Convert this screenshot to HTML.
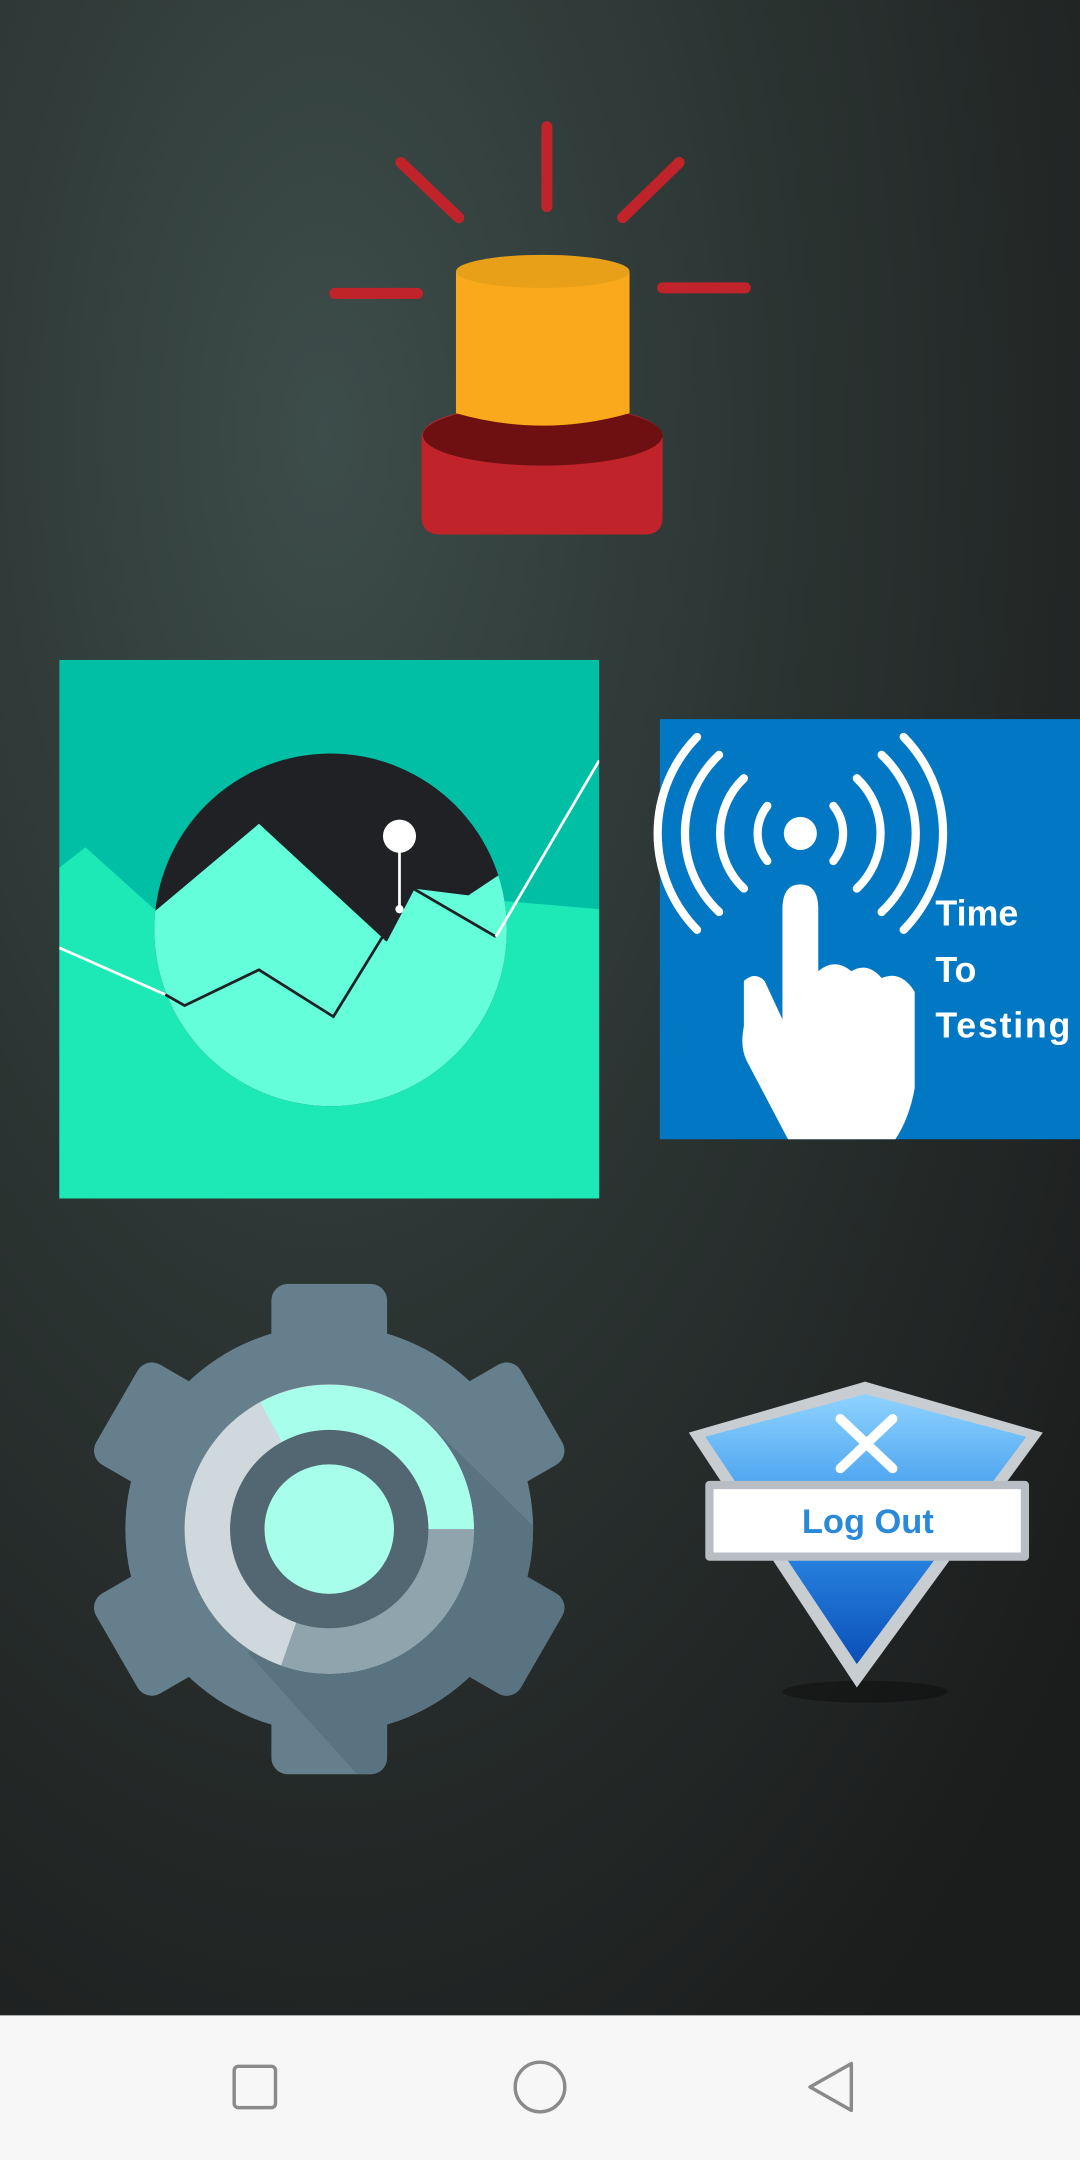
<!DOCTYPE html>
<html><head><meta charset="utf-8"><style>html,body{margin:0;padding:0;width:1080px;height:2160px;overflow:hidden;background:#222}svg{display:block}</style></head><body>
<svg width="1080" height="2160" viewBox="0 0 784 1568" xmlns="http://www.w3.org/2000/svg">
<defs>
<radialGradient id="bg" cx="0.3" cy="0.2" r="0.9">
<stop offset="0" stop-color="#3d4d4a"/><stop offset="0.45" stop-color="#2c3533"/><stop offset="1" stop-color="#1b1c1c"/></radialGradient>
<clipPath id="cc"><circle cx="240" cy="675" r="128"/></clipPath>
<clipPath id="sq"><rect x="43" y="479" width="392" height="391"/></clipPath>
<linearGradient id="sh" x1="0" y1="0" x2="0" y2="1"><stop offset="0" stop-color="#8fd3ff"/><stop offset="0.5" stop-color="#2f8fe8"/><stop offset="1" stop-color="#0a4fb8"/></linearGradient>
<clipPath id="gc">
<circle cx="239" cy="1110" r="148"/>
<rect x="197" y="932" width="84" height="70" rx="12" transform="rotate(0 239 1110)"/>
<rect x="197" y="932" width="84" height="70" rx="12" transform="rotate(60 239 1110)"/>
<rect x="197" y="932" width="84" height="70" rx="12" transform="rotate(120 239 1110)"/>
<rect x="197" y="932" width="84" height="70" rx="12" transform="rotate(180 239 1110)"/>
<rect x="197" y="932" width="84" height="70" rx="12" transform="rotate(240 239 1110)"/>
<rect x="197" y="932" width="84" height="70" rx="12" transform="rotate(300 239 1110)"/>
</clipPath>
</defs>
<rect width="784" height="1568" fill="url(#bg)"/>
<!-- alarm -->
<g stroke="#c0242a" stroke-width="8" stroke-linecap="round">
<line x1="397" y1="92" x2="397" y2="150"/><line x1="291" y1="118" x2="333" y2="158"/><line x1="493" y1="118" x2="452" y2="158"/><line x1="243" y1="213" x2="303" y2="213"/><line x1="481" y1="209" x2="541" y2="209"/></g>
<path d="M306,318 Q306,296 394,294 Q481,296 481,318 L481,375 Q481,388 468,388 L320,388 Q306,388 306,375 Z" fill="#c0242a"/>
<ellipse cx="394" cy="316" rx="87" ry="22" fill="#6e1012"/>
<path d="M331,197 L457,197 L457,300 Q394,318 331,300 Z" fill="#f9a91b"/>
<ellipse cx="394" cy="197" rx="63" ry="12" fill="#e8a019"/>
<!-- chart -->
<g clip-path="url(#sq)">
<rect x="43" y="479" width="392" height="391" fill="#01bfa5"/>
<polygon points="43,630 62,615 112,660 200,640 435,660 435,870 43,870" fill="#1de9b6"/>
<circle cx="240" cy="675" r="128" fill="#1f2125"/>
<polygon clip-path="url(#cc)" points="100,672 188,598 280,683 300,645 340,650 370,630 370,810 100,810" fill="#64ffda"/>
<polyline points="43,688 120,722" fill="none" stroke="#fff" stroke-width="2"/>
<polyline points="120,722 134,730 188,704 242,738 290,660" fill="none" stroke="#1f2125" stroke-width="2"/>
<polyline points="280,683 300,645 360,680" fill="none" stroke="#1f2125" stroke-width="2"/>
<polyline points="360,680 435,552" fill="none" stroke="#fff" stroke-width="2"/>
<line x1="290" y1="607" x2="290" y2="660" stroke="#fff" stroke-width="2"/>
<circle cx="290" cy="607" r="12" fill="#fff"/><circle cx="290" cy="660" r="3" fill="#fff"/>
</g>
<!-- blue -->
<rect x="479" y="522" width="305" height="305" fill="#0277c3"/>
<g fill="none" stroke="#fff" stroke-width="6" stroke-linecap="round">
<path d="M557,585 A32,32 0 0 0 557,625"/><path d="M605,585 A32,32 0 0 1 605,625"/>
<path d="M540,565 A55,55 0 0 0 540,645"/><path d="M622,565 A55,55 0 0 1 622,645"/>
<path d="M522,548 A78,78 0 0 0 522,662"/><path d="M640,548 A78,78 0 0 1 640,662"/>
<path d="M506,535 A100,100 0 0 0 506,675"/><path d="M656,535 A100,100 0 0 1 656,675"/>
</g>
<circle cx="581" cy="605" r="12" fill="#fff"/>
<path d="M568,660 Q568,642 581,642 Q594,642 594,660 L594,705 Q606,695 618,705 Q630,698 640,710 Q654,704 664,720 L664,790 Q660,812 650,827 L572,827 L542,770 Q537,760 540,745 L540,712 Q548,705 555,712 L568,740 Z" fill="#fff"/>
<g font-family="Liberation Sans, sans-serif" font-weight="bold" font-size="26" fill="#fff">
<text x="679" y="672">Time</text><text x="679" y="713">To</text><text x="679" y="753" textLength="98">Testing</text></g>
<!-- gear -->
<g transform="translate(239,1110)" fill="#667f8c">
<circle r="148"/>
<g id="t"><rect x="-42" y="-178" width="84" height="70" rx="12"/></g>
<use href="#t" transform="rotate(60)"/><use href="#t" transform="rotate(120)"/><use href="#t" transform="rotate(180)"/><use href="#t" transform="rotate(240)"/><use href="#t" transform="rotate(300)"/>
</g>
<g clip-path="url(#gc)">
<path d="M313,1035 L420,1140 L420,1300 L270,1300 L180,1200 Z" fill="#546e7a" opacity="0.7"/>
</g>
<g transform="translate(239,1110)">
<circle r="105" fill="#cfd8dc"/>
<path d="M0,0 L-50,-92 A105,105 0 0 1 105,0 Z" fill="#a7ffeb"/>
<path d="M0,0 L105,0 A105,105 0 0 1 -35,99 Z" fill="#90a4ae"/>
<circle r="72" fill="#526771"/>
<circle r="47" fill="#a7ffeb"/>
</g>
<!-- logout -->
<ellipse cx="628" cy="1228" rx="60" ry="8" fill="#000" opacity="0.3"/>
<polygon points="500,1040 628,1003 757,1040 622,1225" fill="#c8cdd2"/>
<polygon points="512,1043 628,1012 745,1043 622,1208" fill="url(#sh)"/>
<g stroke="#fff" stroke-width="7" stroke-linecap="round"><line x1="610" y1="1030" x2="648" y2="1066"/><line x1="648" y1="1030" x2="610" y2="1066"/></g>
<rect x="512" y="1075" width="235" height="58" fill="#b9bec4" rx="3"/>
<rect x="518" y="1081" width="223" height="46" fill="#fff"/>
<text x="630" y="1113" text-anchor="middle" font-family="Liberation Sans, sans-serif" font-weight="bold" font-size="25" fill="#2a8ad8">Log Out</text>
<!-- nav -->
<rect x="0" y="1463" width="784" height="105" fill="#f7f7f7"/>
<rect x="170" y="1500" width="30" height="30" rx="3" fill="none" stroke="#8a8a8a" stroke-width="2.5"/>
<circle cx="392" cy="1515" r="18" fill="none" stroke="#8a8a8a" stroke-width="2.5"/>
<path d="M588,1515 L618,1498 L618,1532 Z" fill="none" stroke="#8a8a8a" stroke-width="2.5" stroke-linejoin="round"/>
</svg>
</body></html>
